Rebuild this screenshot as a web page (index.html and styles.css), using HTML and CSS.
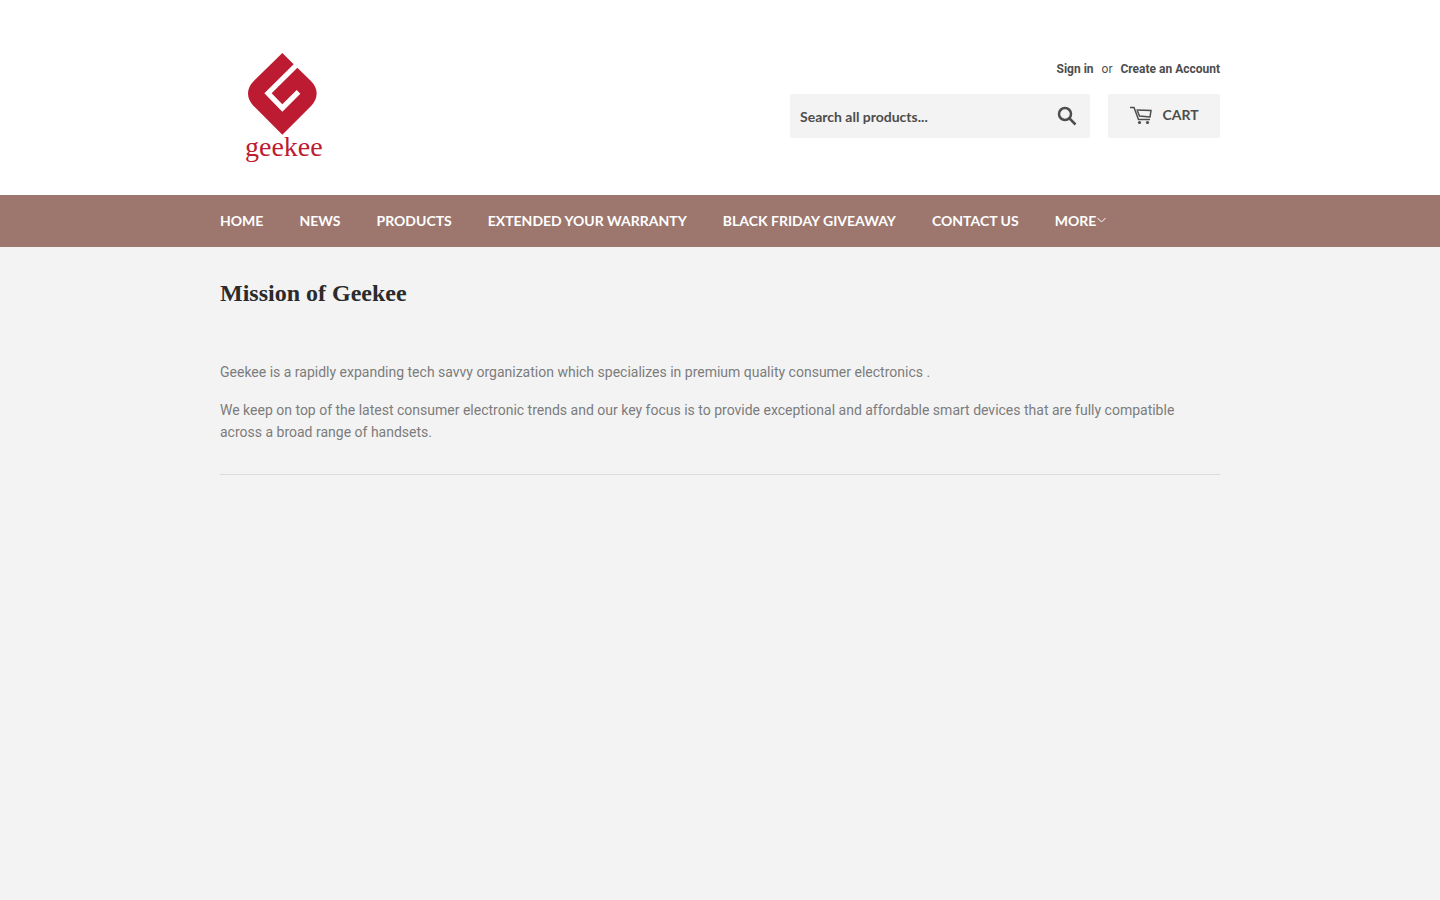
FILE: index.html
```html
<!DOCTYPE html>
<html lang="en">
<head>
    <meta charset="UTF-8">
    <meta name="viewport" content="width=device-width, initial-scale=1.0">
    <title>Mission of Geekee</title>
    <link rel="stylesheet" href="styles.css">
</head>
<body>
    <header class="site-header">
        <div class="wrapper header-row">
            <a href="#" class="logo" aria-label="Geekee">
                <svg width="130" height="135" viewBox="0 0 390 405" aria-hidden="true">
                    <path d="M187 39L221 73L133 160L187 215L241 161L230 150L187 193L155 160L232 83L272 122Q290 140 290 160Q290 180 274 197L187 284L100 197Q84 180 84 160Q84 140 102 122Z"/>
                    <text x="75" y="348">geekee</text>
                </svg>
            </a>

            <div class="header-tools">
                <div class="account-links">
                    <a href="#">Sign in</a>
                    <span>or</span>
                    <a href="#">Create an Account</a>
                </div>
                <div class="tools-row">
                    <form class="search-bar" role="search">
                        <input type="search" placeholder="Search all products..." aria-label="Search all products...">
                        <button type="submit" aria-label="Search">
                            <svg width="20" height="20" viewBox="0 0 20 20" aria-hidden="true">
                                <circle cx="8" cy="8" r="6"/>
                                <path d="M12.200 12.200L18.500 18.500"/>
                            </svg>
                        </button>
                    </form>
                    <a href="#" class="cart-button">
                        <svg width="24" height="20" viewBox="0 0 24 20" aria-hidden="true">
                            <path d="M1 2.500H5L9.500 14.500H21M7.500 5L22 5.500L21 12L10.500 11L8 5"/>
                            <circle cx="10.500" cy="17.500" r="1.600"/>
                            <circle cx="18.500" cy="17.500" r="1.600"/>
                        </svg>
                        CART
                    </a>
                </div>
            </div>
        </div>
    </header>

    <nav class="nav-bar">
        <ul class="wrapper site-nav">
            <li><a href="#">Home</a></li>
            <li><a href="#">News</a></li>
            <li><a href="#">Products</a></li>
            <li><a href="#">Extended your warranty</a></li>
            <li><a href="#">Black Friday Giveaway</a></li>
            <li><a href="#">Contact us</a></li>
            <li>
                <a href="#" aria-haspopup="true">More<svg width="11" height="8" viewBox="0 0 11 8" aria-hidden="true"><path d="M1.500 1L5.500 5L9.500 1"/></svg></a>
            </li>
        </ul>
    </nav>

    <main class="wrapper main-content">
        <h1>Mission of Geekee</h1>
        <div class="rte">
            <p>Geekee is a rapidly expanding tech savvy organization which specializes in premium quality consumer electronics .</p>
            <p>We keep on top of the latest consumer electronic trends and our key focus is to provide exceptional and affordable smart devices that are fully compatible across a broad range of handsets.</p>
        </div>
        <hr>
    </main>
</body>
</html>
```

FILE: styles.css
```css
/* General */
* {
    box-sizing: border-box;
}

body {
    margin: 0;
    background: #f3f3f3;
    color: #7c7c7c;
    font-family: Roboto, sans-serif;
    font-size: 14px;
    line-height: 22px;
}

a {
    color: inherit;
    text-decoration: none;
}

.wrapper {
    max-width: 1060px;
    margin: 0 auto;
    padding: 0 30px;
}

/* Header */
.site-header {
    background: #fff;
    padding: 40px 0 20px;
}

.header-row {
    display: flex;
    align-items: flex-start;
    justify-content: space-between;
}

.logo svg {
    display: block;
    fill: #bc1b31;
    font-family: "Liberation Serif", serif;
    font-size: 84px;
}

.header-tools {
    padding-top: 18px;
}

.account-links {
    display: flex;
    justify-content: flex-end;
    gap: 8px;
    margin-bottom: 14px;
    color: #4d4d4d;
    font-size: 12px;
}

.account-links a {
    font-weight: bold;
}

.tools-row {
    display: flex;
    gap: 18px;
}

.search-bar {
    display: flex;
    width: 300px;
    height: 44px;
    background: #f3f3f3;
    border-radius: 2px;
}

.search-bar input {
    flex: 1;
    min-width: 0;
    padding: 0 10px;
    border: 0;
    background: none;
    color: #4d4d4d;
    font: bold 14px Lato, sans-serif;
}

.search-bar input::placeholder {
    color: #4d4d4d;
    opacity: 1;
}

.search-bar button {
    display: flex;
    align-items: center;
    justify-content: center;
    width: 46px;
    padding: 0;
    border: 0;
    background: none;
    cursor: pointer;
}

.search-bar svg {
    fill: none;
    stroke: #4d4d4d;
    stroke-width: 2.5;
}

.cart-button {
    display: flex;
    align-items: center;
    justify-content: center;
    gap: 9px;
    width: 112px;
    height: 44px;
    padding-bottom: 3px;
    background: #f3f3f3;
    border-radius: 2px;
    color: #4d4d4d;
    font: bold 14px Lato, sans-serif;
}

.cart-button path {
    fill: none;
    stroke: #4d4d4d;
    stroke-width: 1.5;
}

.cart-button circle {
    fill: #4d4d4d;
}

/* Navigation */
.nav-bar {
    background: #9d766e;
}

.site-nav {
    display: flex;
    gap: 36px;
    list-style: none;
}

.site-nav a {
    display: block;
    color: #fff;
    font: bold 14px/52px Lato, sans-serif;
    text-transform: uppercase;
    white-space: nowrap;
}

.site-nav svg {
    margin-bottom: 1px;
    fill: none;
    stroke: #fff;
}

/* Page content */
.main-content {
    padding-top: 30px;
}

h1 {
    margin: 0 0 52px;
    color: #2b2b2b;
    font: bold 24px/32px "Liberation Serif", serif;
}

.rte {
    padding-right: 20px;
}

.rte p {
    margin: 0 0 16px;
}

hr {
    margin: 31px 0;
    border: 0;
    border-top: 1px solid #dcdcdc;
}
```
